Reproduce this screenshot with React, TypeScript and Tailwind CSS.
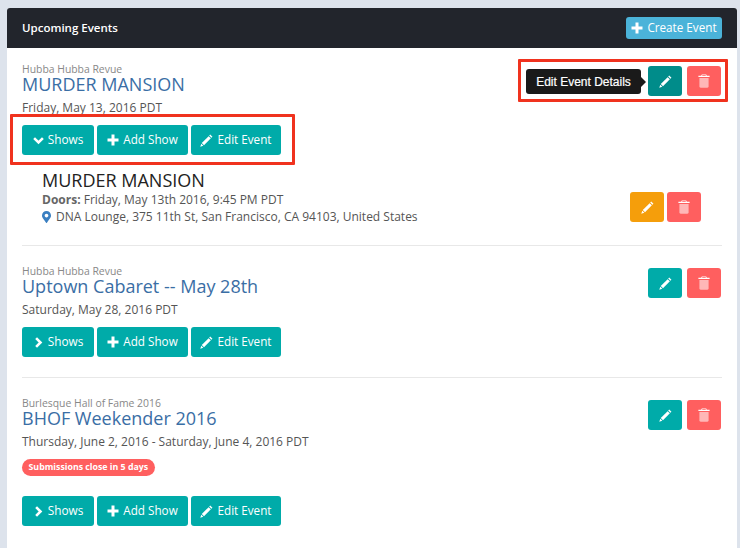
import { FaMapMarkerAlt } from "react-icons/fa";

function PencilIcon({ className }: { className?: string }) {
  return (
    <svg viewBox="0 0 14 14" className={className} fill="currentColor">
      <path d="M11 0.6 13.4 3 12.3 4.1 9.9 1.7Z" />
      <path d="M9.3 2.3 11.7 4.7 4.3 12.1 1.9 9.7Z" />
      <path d="M1.4 10.4 3.6 12.6 0.3 13.7Z" />
    </svg>
  );
}

function TrashIcon({ className }: { className?: string }) {
  return (
    <svg viewBox="0 0 12 14" className={className} fill="currentColor">
      <path d="M3.8 0.4H8.2L8.8 1.8H11.6V3H0.4V1.8H3.2ZM4.4 1.1 4.1 1.8H7.9L7.6 1.1Z" fillRule="evenodd" />
      <path d="M1.4 4H10.6V12.6C10.6 13.3 10.1 13.8 9.4 13.8H2.6C1.9 13.8 1.4 13.3 1.4 12.6Z" opacity="0.55" />
    </svg>
  );
}

function PlusIcon({ className }: { className?: string }) {
  return (
    <svg viewBox="0 0 12 12" className={className} fill="currentColor">
      <path d="M4.5 0.5H7.5V4.5H11.5V7.5H7.5V11.5H4.5V7.5H0.5V4.5H4.5Z" />
    </svg>
  );
}

function ChevronDownIcon({ className }: { className?: string }) {
  return (
    <svg viewBox="0 0 12 12" className={className} fill="none" stroke="currentColor" strokeWidth="2.8">
      <path d="M1.2 3.4 6 8.2 10.8 3.4" />
    </svg>
  );
}

function ChevronRightIcon({ className }: { className?: string }) {
  return (
    <svg viewBox="0 0 12 12" className={className} fill="none" stroke="currentColor" strokeWidth="2.8">
      <path d="M3.4 1.2 8.2 6 3.4 10.8" />
    </svg>
  );
}

function ActionButtons({ expanded }: { expanded?: boolean }) {
  return (
    <div className="flex gap-[3px]">
      <button className="flex h-[30px] w-[72px] items-center justify-center gap-[4px] rounded-[3px] bg-[#00aba9] text-[11.8px] text-white">
        {expanded ? <ChevronDownIcon className="h-[11px] w-[11px]" /> : <ChevronRightIcon className="h-[11px] w-[11px]" />}
        Shows
      </button>
      <button className="flex h-[30px] w-[91px] items-center justify-center gap-[4px] rounded-[3px] bg-[#00aba9] text-[11.7px] text-white">
        <PlusIcon className="h-[12px] w-[12px]" />
        Add Show
      </button>
      <button className="flex h-[30px] w-[90px] items-center justify-center gap-[4px] rounded-[3px] bg-[#00aba9] text-[11.7px] text-white">
        <PencilIcon className="h-[13px] w-[13px]" />
        Edit Event
      </button>
    </div>
  );
}

function IconButtons({ editClass, gapClass = "ml-[5px]" }: { editClass: string; gapClass?: string }) {
  return (
    <div className="mr-[1px] mt-[3px] flex">
      <button className={`flex h-[30px] w-[34px] items-center justify-center rounded-[3px] text-white ${editClass}`}>
        <PencilIcon className="h-[13px] w-[13px]" />
      </button>
      <button className={`flex h-[30px] w-[34px] items-center justify-center rounded-[3px] bg-[#ff5f5f] text-white ${gapClass}`}>
        <TrashIcon className="h-[14px] w-[12px]" />
      </button>
    </div>
  );
}

function EventHead({ org, title, date }: { org: string; title: string; date: string }) {
  return (
    <div>
      <div className="text-[10.4px] leading-[12px] text-[#888]">{org}</div>
      <div className="text-[18px] leading-[18px] text-[#3a6ea5]">{title}</div>
      <div className="mt-[6px] text-[12px] leading-[18px] text-[#555]">{date}</div>
    </div>
  );
}

export default function App() {
  return (
    <div className="relative h-[548px] w-[740px] overflow-hidden bg-[#dde3ec] pl-[7px] pr-[3px] pt-[8px] font-['Open_Sans',sans-serif]">
      <div className="h-[540px] rounded-t-[3px] bg-white">
        <div className="flex h-[40px] items-center justify-between rounded-t-[3px] bg-[#22252c] px-[15px]">
          <span className="text-[11.5px] font-semibold text-white">Upcoming Events</span>
          <button className="flex h-[22px] w-[96px] items-center justify-center gap-[4px] rounded-[3px] bg-[#4bb3d9] text-[11.7px] text-white">
            <PlusIcon className="h-[12px] w-[12px]" />
            Create Event
          </button>
        </div>

        <div className="px-[15px]">
          <section className="h-[198px] border-b border-[#e8e8e8] pt-[15px]">
            <div className="flex justify-between">
              <EventHead org="Hubba Hubba Revue" title="MURDER MANSION" date="Friday, May 13, 2016 PDT" />
              <div className="flex">
                <div className="relative mr-[7px] mt-[6px] flex h-[25px] w-[115px] items-center justify-center rounded-[3px] bg-[#1a1a1a] font-['Liberation_Sans',sans-serif] text-[12px] text-white [-webkit-text-stroke:0.2px_white]">
                  Edit Event Details
                  <span className="absolute right-[-5px] top-[8px] border-y-[5px] border-l-[5px] border-y-transparent border-l-[#1a1a1a]" />
                </div>
                <IconButtons editClass="bg-[#008c8a]" />
              </div>
            </div>
            <div className="mt-[8px]">
              <ActionButtons expanded />
            </div>
            <div className="mt-[14px] flex items-start justify-between pl-[20px] pr-[20px]">
              <div>
                <div className="text-[18px] leading-[22px] text-[#222]">MURDER MANSION</div>
                <div className="text-[12px] leading-[17px] text-[#555]">
                  <b className="font-bold text-[#666]">Doors:</b> Friday, May 13th 2016, 9:45 PM PDT
                </div>
                <div className="flex items-center gap-[5px] text-[12px] leading-[17px] text-[#555]">
                  <FaMapMarkerAlt className="h-[12px] w-[9px] text-[#3a7fc1]" />
                  DNA Lounge, 375 11th St, San Francisco, CA 94103, United States
                </div>
              </div>
              <div className="mt-[20px]">
                <IconButtons editClass="bg-[#f59e0b]" gapClass="ml-[3px]" />
              </div>
            </div>
          </section>

          <section className="h-[132px] border-b border-[#e8e8e8] pt-[19px]">
            <div className="flex justify-between">
              <EventHead org="Hubba Hubba Revue" title="Uptown Cabaret -- May 28th" date="Saturday, May 28, 2016 PDT" />
              <IconButtons editClass="bg-[#00aba9]" />
            </div>
            <div className="mt-[8px]">
              <ActionButtons />
            </div>
          </section>

          <section className="pt-[19px]">
            <div className="flex justify-between">
              <EventHead org="Burlesque Hall of Fame 2016" title="BHOF Weekender 2016" date="Thursday, June 2, 2016 - Saturday, June 4, 2016 PDT" />
              <IconButtons editClass="bg-[#00aba9]" />
            </div>
            <div className="mt-[8px] w-fit rounded-full bg-[#ff5f5f] px-[6.5px] text-[8.8px] font-bold leading-[17px] text-white">
              Submissions close in 5 days
            </div>
            <div className="mt-[20px]">
              <ActionButtons />
            </div>
          </section>
        </div>
      </div>

      <div className="absolute left-[10px] top-[114px] h-[51px] w-[285px] rounded-[1px] border-[3px] border-[#f0321e]" />
      <div className="absolute left-[518px] top-[59px] h-[43px] w-[210px] rounded-[1px] border-[3px] border-[#f0321e]" />
    </div>
  );
}
